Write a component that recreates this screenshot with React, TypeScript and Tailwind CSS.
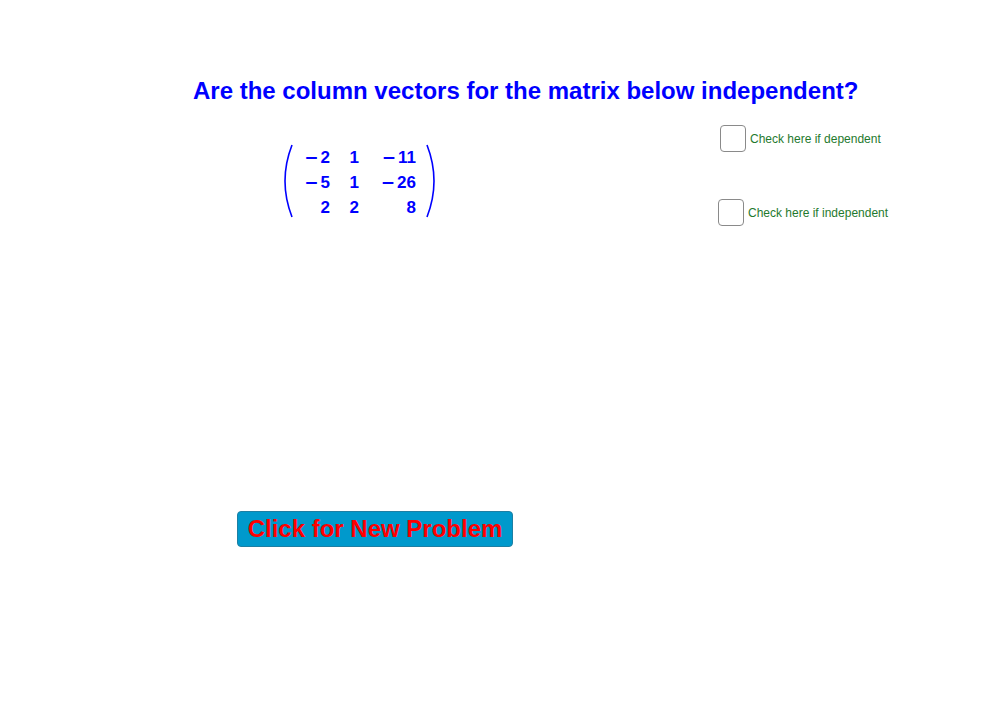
import React, { useState } from "react";

const rows = [
  ["-2", "1", "-11"],
  ["-5", "1", "-26"],
  ["2", "2", "8"],
];

function Entry({ v }: { v: string }) {
  const neg = v.startsWith("-");
  return (
    <span className="text-right whitespace-nowrap">
      {neg && <span className="font-['DejaVu_Sans',sans-serif] font-bold mr-[2px]">{"\u2212"}</span>}
      {neg ? v.slice(1) : v}
    </span>
  );
}

function CheckRow({ label, className }: { label: string; className: string }) {
  const [checked, setChecked] = useState(false);
  return (
    <label className={`absolute flex items-center gap-[4px] cursor-pointer ${className}`}>
      <span
        onClick={() => setChecked(!checked)}
        className="w-[26px] h-[27px] rounded-[4px] border border-[#8a8a8a] bg-white flex items-center justify-center text-[#333] text-sm"
      >
        {checked ? "\u2713" : ""}
      </span>
      <span className="text-[12px] text-[#1f7a2e] font-['Liberation_Sans',Arial,sans-serif]">{label}</span>
    </label>
  );
}

export default function App() {
  return (
    <div className="relative w-[987px] h-[702px] bg-white overflow-hidden font-['Liberation_Sans',Arial,sans-serif]">
      <h1 className="absolute left-[193px] top-[73px] text-[24px] font-bold text-[#0000ff] whitespace-nowrap">
        Are the column vectors for the matrix below independent?
      </h1>

      {/* matrix */}
      <div className="absolute left-[281px] top-[144px] flex items-stretch text-[#0000ff]">
        <svg width="12" height="74" viewBox="0 0 12 74" className="mr-[7px]">
          <path d="M11 1 Q-3 37 11 73" fill="none" stroke="#0000ff" strokeWidth="1.6" />
        </svg>
        <div className="grid grid-cols-[30px_29px_57px] font-bold text-[17px] leading-[25px] pt-[1px]">
          {rows.map((r, i) => r.map((v, j) => <Entry key={`${i}-${j}`} v={v} />))}
        </div>
        <svg width="12" height="74" viewBox="0 0 12 74" className="ml-[10px]">
          <path d="M1 1 Q15 37 1 73" fill="none" stroke="#0000ff" strokeWidth="1.6" />
        </svg>
      </div>

      <CheckRow label="Check here if dependent" className="left-[720px] top-[125px]" />
      <CheckRow label="Check here if independent" className="left-[718px] top-[199px]" />

      <button className="absolute left-[237px] top-[511px] w-[276px] h-[36px] rounded-[4px] border border-[#1d7fa3] bg-[#0099cc] text-[#ff0000] font-bold text-[24px] leading-none">
        Click for New Problem
      </button>
    </div>
  );
}
